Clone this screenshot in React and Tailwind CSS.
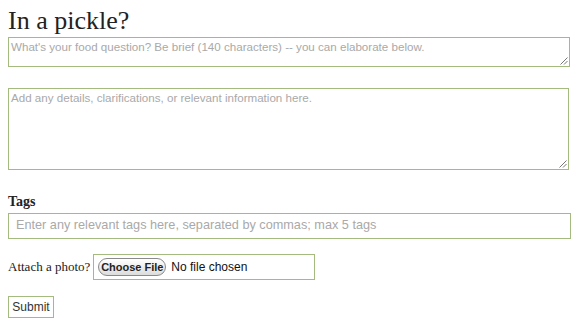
import React from "react";

function Grip() {
  return (
    <svg className="absolute right-[1px] bottom-[1px]" width="9" height="9" viewBox="0 0 9 9">
      <path d="M8.5 1.5 L1.5 8.5 M8.5 5 L5 8.5" stroke="#777" strokeWidth="1" fill="none" />
    </svg>
  );
}

export default function App() {
  return (
    <div className="w-[580px] h-[330px] bg-white overflow-hidden text-[#333] font-['Liberation_Serif',Georgia,serif]">
      <h1 className="pl-2 pt-[6px] text-[26px] leading-[30px] text-[#222]">In a pickle?</h1>
      <div className="relative ml-2 mt-[1px] w-[562px] h-[30px] border border-[#a4bb7f] px-[2px] pt-[1px] text-[11.6px] text-[#a9a9a9] leading-[16px] font-['Liberation_Sans',Arial,sans-serif]">
        What's your food question? Be brief (140 characters) -- you can elaborate below.
        <Grip />
      </div>
      <div className="relative ml-2 mt-[21px] w-[561px] h-[82px] border border-[#a4bb7f] px-[2px] pt-[1px] text-[11.6px] text-[#a9a9a9] leading-[16px] font-['Liberation_Sans',Arial,sans-serif]">
        Add any details, clarifications, or relevant information here.
        <Grip />
      </div>
      <div className="pl-2 mt-[24px] text-[14px] font-bold leading-[16px] text-[#222]">Tags</div>
      <div className="ml-2 mt-[3px] w-[563px] h-[26px] border border-[#a4bb7f] pl-[7px] flex items-center text-[12.7px] text-[#a9a9a9] font-['Liberation_Sans',Arial,sans-serif]">
        Enter any relevant tags here, separated by commas; max 5 tags
      </div>
      <div className="pl-2 mt-[15px] flex items-center h-[26px]">
        <span className="text-[13px] text-[#222]">Attach a photo?</span>
        <div className="ml-[3px] w-[222px] h-[26px] border border-[#a4bb7f] flex items-center pl-[4px] gap-[5px] text-[12px] text-[#111] font-['Liberation_Sans',Arial,sans-serif]">
          <span className="h-[18px] w-[68px] rounded-full border border-[#8a8a8a] bg-gradient-to-b from-white to-[#dcdcdc] flex items-center justify-center text-[11px] font-semibold text-[#222]">Choose File</span>
          <span>No file chosen</span>
        </div>
      </div>
      <div className="pl-2 mt-[16px]">
        <div className="w-[46px] h-[22px] border border-[#a4bb7f] flex items-center justify-center text-[12px] text-[#333] font-['Liberation_Sans',Arial,sans-serif]">Submit</div>
      </div>
    </div>
  );
}
